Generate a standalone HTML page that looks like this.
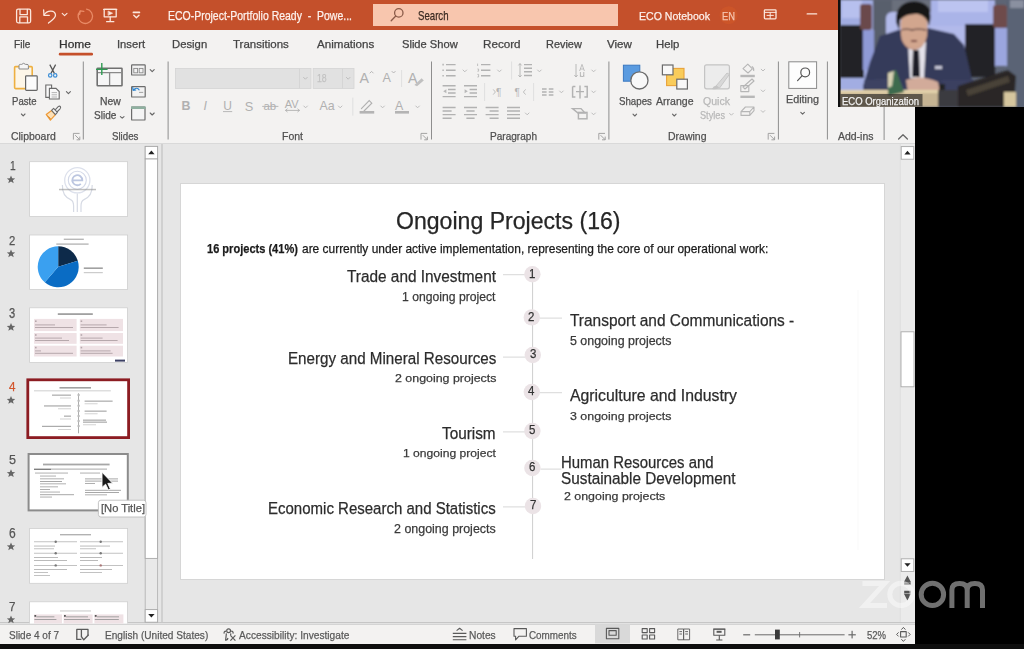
<!DOCTYPE html>
<html><head><meta charset="utf-8">
<style>
html,body{margin:0;padding:0;}
body{width:1024px;height:649px;overflow:hidden;background:#000;position:relative;font-family:"Liberation Sans",sans-serif;}
.a{position:absolute;}
.t{position:absolute;white-space:nowrap;line-height:1;transform-origin:0 0;-webkit-text-stroke:0.25px currentColor;}
svg{position:absolute;overflow:visible;}
</style></head><body>
<!-- title bar -->
<div class="a" style="left:0;top:0;width:838px;height:30px;background:#c4502b;"></div>
<div class="a" style="left:373px;top:4px;width:245px;height:22px;background:#f8c6ae;"></div>
<!-- tabs + ribbon -->
<div class="a" style="left:0;top:30px;width:915px;height:113px;background:#f3f2f1;"></div>
<div class="a" style="left:0;top:142.5px;width:915px;height:1.5px;background:#d9d9d9;"></div>
<!-- main area -->
<div class="a" style="left:0;top:144px;width:915px;height:479.5px;background:#e6e6e6;"></div>
<div class="a" style="left:161px;top:144px;width:1.5px;height:479.5px;background:#d0d0d0;"></div>
<!-- slide -->
<div class="a" style="left:180.5px;top:183.5px;width:703px;height:395px;background:#fff;box-shadow:0 0 0 1px #d6d6d6;"></div>
<!-- status bar -->
<div class="a" style="left:0;top:622px;width:915px;height:22px;background:#f3f2f1;"></div>
<div class="a" style="left:0;top:622px;width:915px;height:1px;background:#c6c6c6;"></div>
<div class="a" style="left:0;top:623px;width:915px;height:1px;background:#e2e2e2;"></div>
<div class="a" style="left:0;top:624px;width:915px;height:1.4px;background:#d4d4d4;"></div>
<!-- black right + bottom -->
<div class="a" style="left:915px;top:107px;width:109px;height:542px;background:#000;"></div>
<div class="a" style="left:0;top:643.8px;width:1024px;height:6px;background:#0e0e0e;"></div>
<!-- video -->
<svg style="left:0;top:0" width="1024" height="649" viewBox="0 0 1024 649">
<g fill="none" stroke="#fbe6dc" stroke-width="1.3" stroke-linejoin="round" stroke-linecap="round">
 <!-- save -->
 <rect x="16.6" y="9.2" width="14" height="13.6" rx="1.5"/>
 <path d="M20 9.4 V14.6 H27.3 V9.4"/>
 <path d="M19.8 22.6 V16.8 H27.5 V22.6"/>
 <!-- undo -->
 <path d="M44 15 C47 10 55 9.5 55.5 15 C55.8 18 51 21 48.5 23"/>
 <path d="M43.6 9.8 L44 15.3 L49.3 15.3"/>
 <path d="M62.2 13.4 L64.6 15.6 L67 13.4" stroke-width="1.1"/>
 <!-- redo faint -->
 <path d="M80.2 11.2 A7.2 7.2 0 1 0 86.6 9.2" stroke="#e98a66"/>
 <path d="M79.6 14.4 L80.2 10.8 L83.8 11.4" stroke="#e98a66"/>
 <!-- present -->
 <rect x="104.2" y="9.4" width="12" height="7.4"/>
 <path d="M103.6 9.3 H116.8"/>
 <path d="M110.2 16.8 V21.6 M106.6 21.7 H113.8"/>
 <path d="M108.4 11.2 L112.6 13.2 L108.4 15.2 Z" fill="#fbe6dc" stroke-width="0.6"/>
 <!-- customize -->
 <path d="M133.4 12.4 H139.4" stroke-width="1.7"/>
 <path d="M133.8 15.2 L136.4 17.8 L139 15.2" stroke-width="1.4"/>
 <!-- ribbon display -->
 <rect x="764.4" y="9.8" width="11.6" height="9" rx="0.8"/>
 <path d="M764.4 12.4 H776 M770.2 12.6 V18.6 M767 15.4 H773.4" stroke-width="1"/>
 <!-- minimize -->
 <path d="M807.2 13.9 H816.6" stroke-width="1.4"/>
</g>
<circle cx="728.6" cy="15.2" r="9" fill="#d45a28" opacity="0.55"/>
<!-- search icon -->
<g fill="none" stroke="#8a5a48" stroke-width="1.3" stroke-linecap="round">
 <circle cx="398.8" cy="12.9" r="4.2"/>
 <path d="M395.8 16 L391.2 20.8"/>
</g>
<!-- home underline -->
<rect x="58.8" y="52.8" width="34.2" height="2.6" rx="1.2" fill="#c5502b"/>
</svg>

<svg style="left:0;top:0" width="1024" height="649" viewBox="0 0 1024 649">
<!-- font boxes -->
<rect x="175.4" y="68.4" width="135.6" height="20" fill="#e1e1e1" stroke="#d4d4d4" stroke-width="0.8"/>
<rect x="299" y="68.8" width="0.8" height="19.4" fill="#d2d2d2"/>
<rect x="313.2" y="68.4" width="40.8" height="20" fill="#e1e1e1" stroke="#d4d4d4" stroke-width="0.8"/>
<rect x="342.2" y="68.8" width="0.8" height="19.4" fill="#d2d2d2"/>
<!-- separators -->
<g fill="#8e8e8e">
 <rect x="82.8" y="61.5" width="1" height="78"/>
 <rect x="167.6" y="61.5" width="1" height="78"/>
 <rect x="431" y="61.5" width="1" height="78"/>
 <rect x="608.4" y="61.5" width="1" height="78"/>
 <rect x="777.9" y="61.5" width="1" height="78"/>
 <rect x="826.9" y="61.5" width="1" height="78"/>
 <rect x="883.6" y="107" width="1" height="33"/>
</g>
<g fill="#dcdcdc">
 <rect x="401.2" y="70" width="0.9" height="17"/>
 <rect x="352.4" y="97.6" width="0.9" height="18"/>
 <rect x="511.2" y="61.5" width="0.9" height="18"/>
 <rect x="484.2" y="83" width="0.9" height="18"/>
 <rect x="533.2" y="83" width="0.9" height="18"/>
</g>
<!-- chevrons (dark) -->
<g fill="none" stroke="#666" stroke-width="1.1" stroke-linecap="round" stroke-linejoin="round">
 <path d="M21.4 114 L23.2 115.8 L25 114"/>
 <path d="M66.4 91.6 L68.4 93.6 L70.4 91.6"/>
 <path d="M120.4 116.6 L122.2 118.2 L124 116.6"/>
 <path d="M150.2 69.6 L152.2 71.6 L154.2 69.6"/>
 <path d="M150.2 113 L152.2 115 L154.2 113"/>
 <path d="M633 114.2 L634.8 116 L636.6 114.2"/>
 <path d="M672.5 114.2 L674.3 116 L676.1 114.2"/>
 <path d="M800.8 112.4 L802.6 114.2 L804.4 112.4"/>
 <path d="M898.6 139 L903 134.8 L907.4 139" stroke-width="1.3"/>
</g>
<!-- light chevrons -->
<g fill="none" stroke="#bdbdbd" stroke-width="1" stroke-linecap="round" stroke-linejoin="round">
 <path d="M303.6 77.4 L305.4 79.2 L307.2 77.4"/>
 <path d="M346.4 77.4 L348.2 79.2 L350 77.4"/>
 <path d="M303.8 106 L305.6 107.8 L307.4 106"/>
 <path d="M338.4 106 L340.2 107.8 L342 106"/>
 <path d="M380.8 106 L382.6 107.8 L384.4 106"/>
 <path d="M415.8 106 L417.6 107.8 L419.4 106"/>
 <path d="M463 70 L464.8 71.8 L466.6 70"/>
 <path d="M497.6 70 L499.4 71.8 L501.2 70"/>
 <path d="M537.6 70 L539.4 71.8 L541.2 70"/>
 <path d="M591.8 70 L593.6 71.8 L595.4 70"/>
 <path d="M559.6 91 L561.4 92.8 L563.2 91"/>
 <path d="M591.8 91 L593.6 92.8 L595.4 91"/>
 <path d="M525.4 113 L527.2 114.8 L529 113"/>
 <path d="M591.8 113 L593.6 114.8 L595.4 113"/>
 <path d="M729.6 113.4 L731.4 115.2 L733.2 113.4"/>
 <path d="M761.2 69.2 L763 71 L764.8 69.2"/>
 <path d="M761.2 90 L763 91.8 L764.8 90"/>
 <path d="M761.2 110.6 L763 112.4 L764.8 110.6"/>
</g>
<!-- dialog launchers -->
<g fill="none" stroke="#9a9a9a" stroke-width="0.9">
 <path d="M73.4 139.6 V133.4 H79.6 M75.2 135.2 L79.6 139.6 M79.8 136.6 V139.8 H76.6"/>
 <path d="M421 139.6 V133.4 H427.2 M422.8 135.2 L427.2 139.6 M427.4 136.6 V139.8 H424.2"/>
 <path d="M598.8 139.6 V133.4 H605 M600.6 135.2 L605 139.6 M605.2 136.6 V139.8 H602"/>
 <path d="M768.2 139.6 V133.4 H774.4 M770 135.2 L774.4 139.6 M774.6 136.6 V139.8 H771.4"/>
</g>
<!-- Paste -->
<rect x="14.6" y="66.6" width="17.6" height="22" rx="1" fill="#fdf6e8" stroke="#eeb040" stroke-width="1.6"/>
<path d="M19 69 V65.6 Q19 64.4 20.4 64.4 H21.6 Q23.6 62.2 25.6 64.4 H27 Q28.4 64.4 28.4 65.6 V69 Z" fill="#f6f6f6" stroke="#8a8a8a" stroke-width="1"/>
<rect x="25.6" y="75.8" width="11.6" height="14.6" rx="0.8" fill="#fbfbfb" stroke="#666" stroke-width="1.2"/>
<!-- scissors -->
<g fill="none" stroke-width="1.2">
 <path d="M49.8 64.6 L54.4 73.4 M55.6 64.6 L51 73.4" stroke="#555"/>
 <circle cx="50.2" cy="75.4" r="1.7" stroke="#3b8ed6"/>
 <circle cx="55.2" cy="75.4" r="1.7" stroke="#3b8ed6"/>
</g>
<!-- copy -->
<g fill="#f8f8f8" stroke="#6a6a6a" stroke-width="1.1">
 <path d="M45.8 85 H51.6 V97.4 H45.8 Z"/>
 <path d="M49.4 88.4 H56 L59.2 91.6 V99 H49.4 Z"/>
 <path d="M51.6 92.6 H57 M51.6 94.8 H57 M51.6 97 H57" stroke-width="0.7" stroke="#999"/>
</g>
<!-- format painter -->
<path d="M46.2 114.4 L51.6 110.4 L55.4 114.6 L50.4 120.2 Z" fill="#fbe0b8" stroke="#ef9a36" stroke-width="1.2" stroke-linejoin="round"/>
<path d="M47.4 116.2 L50.6 119 L49.4 117.6 Z" stroke="#ef9a36" stroke-width="1"/>
<path d="M51.6 110.4 L53.6 108.4 L57.4 112.4 L55.4 114.6 Z M55.2 109.8 L58.2 106.6 Q59.6 105.6 60.4 106.6 Q61 107.6 60 108.8 L57 112" fill="#f6f6f6" stroke="#6a6a6a" stroke-width="1.1" stroke-linejoin="round"/>
<!-- New slide -->
<rect x="97.2" y="68.2" width="24.8" height="17.6" rx="0.6" fill="#f6f6f6" stroke="#707070" stroke-width="1.6"/>
<path d="M98 72.6 H121.4 M109.6 73 V85" stroke="#8a8a8a" stroke-width="1.3" fill="none"/>
<path d="M101.8 63 V75 M96 69.4 H107.6" stroke="#2e9b52" stroke-width="1.4" fill="none"/>
<!-- layout -->
<rect x="131.6" y="64.8" width="13.6" height="10.2" rx="0.6" fill="#f2f2f2" stroke="#6c6c6c" stroke-width="1.2"/>
<rect x="133.8" y="68.4" width="3.8" height="4.4" fill="none" stroke="#8a8a8a" stroke-width="0.9"/><rect x="139.2" y="68.4" width="3.8" height="4.4" fill="none" stroke="#8a8a8a" stroke-width="0.9"/>
<!-- reset -->
<rect x="131.6" y="86.6" width="13.6" height="10.4" rx="0.6" fill="#f2f2f2" stroke="#6c6c6c" stroke-width="1.2"/>
<path d="M133.2 90 Q137 86.4 139.4 90.2 M132.6 87.2 L133.2 90.4 L136.2 90" stroke="#2f86d0" stroke-width="1.2" fill="none"/>
<path d="M139 92.4 H143.2" stroke="#999" stroke-width="0.9"/>
<!-- section -->
<rect x="131.6" y="107" width="13.4" height="13" rx="0.6" fill="#f4f4f4" stroke="#6c6c6c" stroke-width="1.2"/>
<rect x="131" y="106.4" width="14.6" height="2.6" fill="#8fb0a0"/>
<!-- disabled glyph icons -->
<g fill="#b0b0b0" font-family="Liberation Sans" >
 <text x="359.4" y="82.6" font-size="15" transform="translate(359.4 82.6) scale(0.95 1) translate(-359.4 -82.6)">A</text>
 <text x="382.6" y="82.4" font-size="12.6">A</text>
 <text x="408" y="82.6" font-size="14">A</text>
 <text x="181.6" y="110.4" font-size="12.4" font-weight="bold">B</text>
 <text x="203.6" y="110.4" font-size="12.4" font-style="italic">I</text>
 <text x="223.2" y="110" font-size="12">U</text>
 <text x="244.8" y="110.6" font-size="12.8">S</text>
 <text x="263.4" y="110" font-size="11.4">ab</text>
 <text x="284.8" y="107.6" font-size="11">AV</text>
 <text x="319.6" y="110.2" font-size="12.4">Aa</text>
 <text x="395" y="110" font-size="12.4">A</text>
</g>
<g fill="none" stroke="#b0b0b0" stroke-width="0.9" stroke-linecap="round">
 <path d="M370 73 L371.6 71.4 L373.2 73"/>
 <path d="M392 71.4 L393.6 73 L395.2 71.4"/>
 <path d="M223.4 111.6 H231.8"/>
 <path d="M262.6 106.4 H278"/>
 <path d="M285.6 110.4 H299.4 M287.2 109 L285.6 110.4 L287.2 111.8 M297.8 109 L299.4 110.4 L297.8 111.8"/>
 <path d="M414.4 85 L421.6 78.2 L423.8 80.4 L417 86.2 Z" fill="#c0c0c0" stroke="none"/>
 <path d="M361.4 108.6 L369.2 100.6 L371.8 103.2 L364 111" stroke-width="1.1"/>
</g>
<rect x="359.6" y="111" width="14.6" height="2.6" fill="#b4b4b4"/>
<rect x="395" y="111" width="14" height="2.6" fill="#b4b4b4"/>
<!-- paragraph icons -->
<g fill="none" stroke="#b2b2b2" stroke-width="1.45">
 <path d="M446 64.6 H455.6 M446 70.2 H455.6 M446 75.8 H455.6"/>
 <path d="M442.4 64.6 H443.8 M442.4 70.2 H443.8 M442.4 75.8 H443.8" stroke-width="1.6"/>
 <path d="M481 64.6 H490.4 M481 70.2 H490.4 M481 75.8 H490.4"/>
 <path d="M477.6 63.6 V66 M477.4 69 H478.6 V71.2 H477.4 M477.4 74.4 H478.6 V77 H477.4" stroke-width="0.8"/>
 <path d="M524 64.6 H532 M524 68.2 H532 M524 71.8 H532 M524 75.4 H532"/>
 <path d="M520 63.6 V77 M518.4 65.4 L520 63.6 L521.6 65.4 M518.4 75.2 L520 77 L521.6 75.2" stroke-width="0.9"/>
 <path d="M576 64 V77 M574.4 75 L576 77 L577.6 75 M580.4 77 V72 M583.8 77 V72 M580.4 75.2 L582.1 77 L583.8 75.2" stroke-width="0.9"/>
 <path d="M579.6 71 L582 64.4 L584.4 71 M580.4 69 H583.6" stroke-width="0.8"/>
 <path d="M442.6 85.8 H455.6 M448 89.4 H455.6 M448 93 H455.6 M442.6 96.6 H455.6"/>
 <path d="M443.2 91.2 L446.4 89.2 V93.2 Z" fill="#b8b8b8" stroke="none"/>
 <path d="M464 85.8 H477 M469.6 89.4 H477 M469.6 93 H477 M464 96.6 H477"/>
 <path d="M467.8 91.2 L464.6 89.2 V93.2 Z" fill="#b8b8b8" stroke="none"/>
 <path d="M542 89 H546.6 M542 92 H546.6 M542 95 H546.6 M548.8 89 H553.4 M548.8 92 H553.4 M548.8 95 H553.4"/>
 <path d="M572.6 86.4 H575.4 M572.6 86.4 V97 H575.4 M584.4 86.4 H587.2 V97 H584.4 M580 85.4 V98.4 M576 91.6 H584"/>
 <path d="M442.6 107.4 H455.6 M442.6 111 H451.6 M442.6 114.6 H455.6 M442.6 118.2 H451.6"/>
 <path d="M464 107.4 H477 M466.4 111 H474.6 M464 114.6 H477 M466.4 118.2 H474.6"/>
 <path d="M485.6 107.4 H498.6 M489.6 111 H498.6 M485.6 114.6 H498.6 M489.6 118.2 H498.6"/>
 <path d="M507 107.4 H520 M507 111 H520 M507 114.6 H520 M507 118.2 H520"/>
 <path d="M572.6 108.6 H581 L585 113 H578 Z"/>
 <rect x="578.4" y="112.4" width="8.6" height="6.4"/>
</g>
<g fill="#b4b4b4" font-family="Liberation Sans" font-size="10">
 <text x="496" y="96">¶</text>
 <text x="514.6" y="96">¶</text>
</g>
<g fill="none" stroke="#b8b8b8" stroke-width="0.9">
 <path d="M493.2 89.4 L495.4 92 L493.2 94.6"/>
 <path d="M525.6 89.4 L523.4 92 L525.6 94.6"/>
</g>
<!-- Shapes -->
<rect x="623.4" y="65.2" width="16.4" height="16" fill="#5a9be0" stroke="#3a78c0" stroke-width="1"/>
<circle cx="639.4" cy="80.4" r="8.6" fill="#f8f8f8" stroke="#6a6a6a" stroke-width="1.3"/>
<!-- Arrange -->
<rect x="666.6" y="68.4" width="17.4" height="17.2" fill="#f9cc5a" stroke="#e9a23a" stroke-width="1.1"/>
<rect x="662.4" y="65" width="10.6" height="9.8" fill="#f8f8f8" stroke="#6a6a6a" stroke-width="1.2"/>
<rect x="676.8" y="79.2" width="10.6" height="9.8" fill="#f8f8f8" stroke="#6a6a6a" stroke-width="1.2"/>
<!-- Quick styles -->
<rect x="704.6" y="64.8" width="24.8" height="24" rx="2" fill="#ececec" stroke="#c4c4c4" stroke-width="1.2"/>
<path d="M716 86 L727 73 L729.4 74.4 L719.6 88 Z" fill="#d8d8d8" stroke="#c0c0c0" stroke-width="0.8"/>
<path d="M712 89 Q714 85 717 86 L719 88 Q716 90 712 89 Z" fill="#c4c4c4"/>
<!-- shape fill/outline/effects -->
<g fill="none" stroke="#b6b6b6" stroke-width="1.1" stroke-linejoin="round">
 <path d="M743 68.6 L747.8 64.2 L752.4 68.8 L748 73 Z"/>
 <path d="M751.8 66.4 Q754.4 68.2 753.6 71"/>
 <path d="M743 87 L752 79 L754 81 L745 89 Z"/>
 <rect x="740.8" y="85.6" width="8" height="6"/>
 <path d="M741 111.6 L745.4 107 H754 L749.8 111.6 Z M741 111.6 V115.4 H749.8 L754 110.6 V107 M749.8 111.6 V115.4"/>
</g>
<rect x="740.4" y="74.8" width="14.4" height="2.4" fill="#b8b8b8"/>
<rect x="740.4" y="95.6" width="14.4" height="2.4" fill="#b8b8b8"/>
<!-- Editing -->
<rect x="788.8" y="61.8" width="27.8" height="26.6" fill="#fdfdfd" stroke="#8a8a8a" stroke-width="1"/>
<g fill="none" stroke="#555" stroke-width="1.2" stroke-linecap="round">
 <circle cx="805.2" cy="72.4" r="4.4"/>
 <path d="M802 75.8 L797.6 80.6"/>
</g>
</svg>

<svg style="left:0;top:0" width="1024" height="649" viewBox="0 0 1024 649">
<defs>
 <filter id="tb" x="-10%" y="-10%" width="120%" height="120%"><feGaussianBlur stdDeviation="0.35"/></filter>
 <clipPath id="pclip"><rect x="0" y="144" width="161" height="479.4"/></clipPath>
</defs>
<g clip-path="url(#pclip)">
<!-- stars -->
<g fill="#666">
 <path id="star" d="M11 175.4 L12.2 178.2 L15.2 178.4 L12.9 180.3 L13.7 183.2 L11 181.6 L8.3 183.2 L9.1 180.3 L6.8 178.4 L9.8 178.2 Z"/>
 <use href="#star" y="74"/>
 <use href="#star" y="147.6"/>
 <use href="#star" y="220.6"/>
 <use href="#star" y="293.8"/>
 <use href="#star" y="367"/>
 <use href="#star" y="440"/>
</g>
<!-- thumb 1 -->
<rect x="29.6" y="161.7" width="98" height="54.8" fill="#fff" stroke="#cfcfcf" stroke-width="0.8"/>
<g fill="none" filter="url(#tb)">
 <circle cx="77.3" cy="180.3" r="12.6" stroke="#dde1ec" stroke-width="1.3"/>
 <circle cx="77.3" cy="180.3" r="9" stroke="#d4d9e8" stroke-width="1.1"/>
 <path d="M72.3 180.3 H82.3 A5 5 0 1 0 80.8 183.8" stroke="#bcc6e0" stroke-width="1.8"/>
 <path d="M62.4 185 Q62 196 70.6 199.6 Q73.6 201 73.6 206 V212 M92.2 185 Q92.6 196 84 199.6 Q81 201 81 206 V212 M77.3 193.4 V212" stroke="#d6dae4" stroke-width="1.2"/>
</g>
<rect x="59" y="188.8" width="37" height="1.5" fill="#8a8a8a" opacity="0.55"/>
<!-- thumb 2 -->
<rect x="29.6" y="235" width="98" height="54.5" fill="#fff" stroke="#cfcfcf" stroke-width="0.8"/>
<rect x="63.8" y="238.6" width="20" height="1.4" fill="#9a9a9a" opacity="0.7"/>
<rect x="56.3" y="243.4" width="32.3" height="1.4" fill="#9a9a9a" opacity="0.7"/>
<g transform="translate(58.2 266.8)">
 <path d="M0 0 L0 -20.5 A20.5 20.5 0 0 1 19.6 -6 Z" fill="#0d2a4a"/>
 <path d="M0 0 L19.6 -6 A20.5 20.5 0 0 1 -13.4 15.5 Z" fill="#0a6cc4"/>
 <path d="M0 0 L-13.4 15.5 A20.5 20.5 0 0 1 0 -20.5 Z" fill="#3aa0f0"/>
</g>
<rect x="83.8" y="267.4" width="19" height="1.6" fill="#8a8a8a" opacity="0.8"/>
<rect x="83.8" y="272" width="19" height="1.2" fill="#aaa" opacity="0.6"/>
<!-- thumb 3 -->
<rect x="29.6" y="307.8" width="97.8" height="54.8" fill="#fff" stroke="#cfcfcf" stroke-width="0.8"/>
<rect x="57.8" y="313.2" width="35" height="1.8" fill="#8a8a8a" opacity="0.8"/>
<g fill="#efe2e5">
 <rect x="34.1" y="318.9" width="42.5" height="12.2"/>
 <rect x="79.8" y="318.9" width="43.2" height="12.2"/>
 <rect x="34.1" y="333" width="42.5" height="10.8"/>
 <rect x="79.8" y="333" width="43.2" height="10.8"/>
 <rect x="34.1" y="345.7" width="42.5" height="10.8"/>
 <rect x="79.8" y="345.7" width="43.2" height="10.8"/>
</g>
<g fill="#a89a9e" opacity="0.8">
 <rect x="35" y="324.4" width="20" height="1"/><rect x="35" y="327" width="38" height="1"/>
 <rect x="80.6" y="324.4" width="26" height="1"/><rect x="80.6" y="327" width="38" height="1"/>
 <rect x="35" y="337.6" width="27" height="1"/><rect x="35" y="340" width="34" height="1"/>
 <rect x="80.6" y="337.6" width="22" height="1"/><rect x="80.6" y="340" width="37" height="1"/>
 <rect x="35" y="350.4" width="6" height="1"/><rect x="35" y="352.8" width="38" height="1"/>
 <rect x="80.6" y="350.4" width="30" height="1"/><rect x="80.6" y="352.8" width="32" height="1"/>
 <rect x="35" y="320.4" width="1.6" height="1.6"/><rect x="80.6" y="320.4" width="1.6" height="1.6"/>
 <rect x="35" y="334.2" width="1.6" height="1.6"/><rect x="80.6" y="334.2" width="1.6" height="1.6"/>
 <rect x="35" y="346.8" width="1.6" height="1.6"/><rect x="80.6" y="346.8" width="1.6" height="1.6"/>
</g>
<rect x="115" y="359.6" width="10" height="2" fill="#3c4064"/>
<!-- thumb 4 selected -->
<rect x="27.8" y="379.8" width="100.8" height="57.8" fill="#fff" stroke="#8c1c22" stroke-width="2.8"/>
<g fill="#8a8a8a" opacity="0.8">
 <rect x="59.5" y="387" width="31.5" height="1.6"/>
 <rect x="34" y="390.4" width="76.8" height="0.9" opacity="0.6"/>
 <rect x="52" y="394.6" width="19" height="1.1"/><rect x="60" y="397.6" width="11" height="0.8" opacity="0.6"/>
 <rect x="84.6" y="400.6" width="28" height="1.1"/><rect x="84.6" y="403.4" width="13" height="0.8" opacity="0.6"/>
 <rect x="44" y="405.4" width="27" height="1.1"/><rect x="58" y="408.4" width="13" height="0.8" opacity="0.6"/>
 <rect x="84.6" y="410.6" width="22" height="1.1"/><rect x="84.6" y="413.4" width="13" height="0.8" opacity="0.6"/>
 <rect x="64" y="415.6" width="7" height="1.1"/><rect x="60" y="418.6" width="11" height="0.8" opacity="0.6"/>
 <rect x="83" y="419.6" width="23" height="1.1"/><rect x="83" y="421.6" width="24" height="1.1"/><rect x="83" y="424.4" width="13" height="0.8" opacity="0.6"/>
 <rect x="42" y="425.8" width="29" height="1.1"/><rect x="58" y="429" width="13" height="0.8" opacity="0.6"/>
</g>
<rect x="78.2" y="393.3" width="0.8" height="40" fill="#999"/>
<g fill="#bbb"><circle cx="78.6" cy="395" r="1.2"/><circle cx="78.6" cy="400.8" r="1.2"/><circle cx="78.6" cy="405.8" r="1.2"/><circle cx="78.6" cy="411" r="1.2"/><circle cx="78.6" cy="416" r="1.2"/><circle cx="78.6" cy="421" r="1.2"/><circle cx="78.6" cy="426" r="1.2"/></g>
<!-- thumb 5 hover -->
<rect x="28.6" y="454" width="99.2" height="56.4" fill="#fff" stroke="#8c8c8c" stroke-width="2"/>
<g fill="#8a8a8a" opacity="0.75">
 <rect x="43" y="463.6" width="66.6" height="1.8"/>
 <rect x="34" y="468.6" width="17" height="1.4" fill="#555"/><rect x="51" y="468.6" width="56" height="1"/>
 <rect x="35" y="472.6" width="33" height="0.9"/><rect x="80" y="472.6" width="20" height="0.9"/>
 <rect x="40" y="475.6" width="16" height="0.9"/><rect x="40" y="478.4" width="24" height="0.9"/>
 <rect x="40" y="481" width="22" height="1"/><rect x="40" y="483.4" width="26" height="0.9"/>
 <rect x="40" y="486.4" width="18" height="0.9"/><rect x="40" y="489" width="10" height="0.9"/>
 <rect x="40" y="491.6" width="20" height="0.9"/><rect x="40" y="494.2" width="34" height="1"/>
 <rect x="40" y="496.6" width="12" height="0.9"/>
 <rect x="85" y="478.4" width="33" height="1"/><rect x="85" y="480.6" width="33" height="1"/><rect x="85" y="483" width="10" height="0.9"/>
 <rect x="85" y="489.8" width="36" height="1"/><rect x="85" y="492" width="34" height="1"/><rect x="85" y="494.4" width="22" height="0.9"/>
</g>
<!-- cursor -->
<path d="M102 472.2 L102 487.4 L105.6 484.2 L108.4 490 L110.4 489 L107.8 483.4 L112.6 483.2 Z" fill="#1a1a1a" stroke="#fff" stroke-width="0.9"/>
<!-- tooltip -->

<!-- thumb 6 -->
<rect x="29.6" y="528.5" width="98" height="54.8" fill="#fff" stroke="#cfcfcf" stroke-width="0.8"/>
<g fill="#999" opacity="0.75">
 <rect x="60" y="534" width="31" height="1.4"/>
 <rect x="34" y="541.4" width="43" height="0.8"/><rect x="80" y="541.4" width="43" height="0.8"/>
 <rect x="34" y="552.8" width="43" height="0.8"/><rect x="80" y="552.8" width="43" height="0.8"/>
 <rect x="34" y="565" width="43" height="0.8"/><rect x="80" y="565" width="43" height="0.8"/>
 <rect x="34" y="545.6" width="21" height="0.9"/><rect x="34" y="548.4" width="20" height="0.8"/>
 <rect x="80" y="545.6" width="30" height="0.9"/><rect x="80" y="548.4" width="16" height="0.8"/>
 <rect x="34" y="557" width="24" height="0.9"/><rect x="34" y="560" width="33" height="0.9"/>
 <rect x="80" y="557" width="22" height="0.9"/><rect x="80" y="560" width="18" height="0.9"/>
 <rect x="34" y="569" width="33" height="0.9"/><rect x="34" y="572" width="14" height="0.8"/><rect x="34" y="575" width="16" height="0.8"/>
 <rect x="80" y="569" width="32" height="0.9"/><rect x="80" y="572" width="22" height="0.8"/>
</g>
<g fill="#777"><circle cx="55.7" cy="541.8" r="1.2"/><circle cx="100.7" cy="541.8" r="1.2"/><circle cx="55.7" cy="553.2" r="1.2"/><circle cx="100.7" cy="553.2" r="1.2"/><circle cx="55.7" cy="565.4" r="1.2"/><circle cx="100.7" cy="565.4" r="1.2" fill="#a77"/></g>
<!-- thumb 7 -->
<rect x="29.6" y="601.8" width="98" height="40" fill="#fff" stroke="#cfcfcf" stroke-width="0.8"/>
<rect x="60" y="610.4" width="31" height="1.1" fill="#aaa" opacity="0.6"/>
<g fill="#efe2e5"><rect x="34" y="614.4" width="28" height="12"/><rect x="63.6" y="614.4" width="29" height="12"/><rect x="94.4" y="614.4" width="29" height="12"/></g>
<g fill="#555"><rect x="34.4" y="615" width="1.8" height="1.8"/><rect x="64" y="615" width="1.8" height="1.8"/><rect x="94.8" y="615" width="1.8" height="1.8"/></g>
<g fill="#999"><rect x="36.4" y="616.4" width="18" height="0.9"/><rect x="66" y="616.4" width="22" height="0.9"/><rect x="97" y="616.4" width="22" height="0.9"/>
<rect x="34.4" y="619" width="22" height="0.9"/><rect x="64" y="619" width="26" height="0.9"/><rect x="94.8" y="619" width="24" height="0.9"/></g>
</g>
<!-- left scrollbar -->
<rect x="145.2" y="146.4" width="12.4" height="475.4" fill="#e9e9e9" stroke="#b4b4b4" stroke-width="0.9"/>
<rect x="145.2" y="146.4" width="12.4" height="12.6" fill="#fff" stroke="#a8a8a8" stroke-width="0.9"/>
<path d="M148.2 154.2 L151.4 150.6 L154.6 154.2 Z" fill="#222"/>
<rect x="145.2" y="159" width="12.4" height="399.4" fill="#fff" stroke="#a8a8a8" stroke-width="0.9"/>
<rect x="145.2" y="609.6" width="12.4" height="12.6" fill="#fff" stroke="#a8a8a8" stroke-width="0.9"/>
<path d="M148.2 614 L151.4 617.6 L154.6 614 Z" fill="#222"/>
<!-- right scrollbar -->
<rect x="900.4" y="144" width="14.6" height="478" fill="#ebebeb"/>
<rect x="899.8" y="144" width="0.8" height="478" fill="#dcdcdc"/>
<rect x="901.2" y="146.6" width="12.6" height="12.6" fill="#fff" stroke="#a8a8a8" stroke-width="0.9"/>
<path d="M904.4 154.4 L907.5 150.8 L910.6 154.4 Z" fill="#222"/>
<rect x="901" y="331.8" width="13" height="55" fill="#fff" stroke="#a8a8a8" stroke-width="0.9"/>
<rect x="901.2" y="558.8" width="12.6" height="12.6" fill="#fff" stroke="#a8a8a8" stroke-width="0.9"/>
<path d="M904.4 563.2 L907.5 566.8 L910.6 563.2 Z" fill="#222"/>
<g fill="#555">
 <path d="M903.8 582.2 L907.4 575.6 L911 582.2 Z M904.2 582.6 H910.6 V584.8 H904.2 Z"/>
 <path d="M904.2 590.8 H910.6 V593 H904.2 Z M903.8 593.4 H911 L907.4 600.4 Z"/>
</g>
<rect x="98.4" y="500.2" width="47.6" height="16.8" rx="2.5" fill="#fff" stroke="#bdbdbd" stroke-width="0.9"/>
</svg>

<svg style="left:0;top:0" width="1024" height="649" viewBox="0 0 1024 649">
<rect x="532" y="274" width="1.1" height="285" fill="#d2d2d2"/>
<g fill="#d8d8d8">
 <rect x="503" y="274.2" width="22" height="1"/>
 <rect x="539.6" y="317.6" width="22.4" height="1"/>
 <rect x="503" y="356.6" width="22" height="1"/>
 <rect x="539.6" y="392.2" width="22.4" height="1"/>
 <rect x="503" y="431.4" width="22" height="1"/>
 <rect x="540.4" y="468.6" width="21" height="1"/>
 <rect x="503" y="506.4" width="22" height="1"/>
</g>
<g fill="#ebe3e6">
 <circle cx="532.4" cy="274.2" r="8.2"/>
 <circle cx="531.8" cy="317.4" r="8.2"/>
 <circle cx="532.8" cy="355" r="8.2"/>
 <circle cx="531.8" cy="392" r="8.2"/>
 <circle cx="532.4" cy="431" r="8.2"/>
 <circle cx="532.4" cy="468" r="8.2"/>
 <circle cx="533" cy="506" r="8.2"/>
</g>
<rect x="857.6" y="290" width="0.8" height="260" fill="#f7f7f7"/>
</svg>

<svg style="left:0;top:0" width="1024" height="649" viewBox="0 0 1024 649">
<rect x="595" y="624.4" width="35" height="19" fill="#d9d9d9"/>
<g fill="none" stroke="#5a5a5a" stroke-width="1.1" stroke-linejoin="round">
 <!-- notes book -->
 <path d="M81.4 639.4 H76.8 V629.4 H81.4 V637.2 M81.4 629.4 H88 V635.2" stroke-width="1.3"/>
 <path d="M81.6 637 L83.8 639.8 L88.6 634.8" stroke-width="1.3"/>
 <!-- accessibility -->
 <circle cx="228.6" cy="630.8" r="1.9" stroke-width="1.2"/>
 <path d="M224.2 633.6 Q223.6 631.4 226 631.2 M233 633.6 Q233.6 631.4 231.2 631.2 M226.4 633.4 L225.6 640.2 Q227.4 640.6 228 638 M230.8 633.4 L230.6 635.2" stroke-width="1.2"/>
 <path d="M230.4 635.4 L235.4 640.6 M235.4 635.4 L230.4 640.6" stroke-width="1.2"/>
 <!-- notes -->
 <path d="M452.8 633.4 H466.4 M452.8 636.6 H466.4 M452.8 639.8 H466.4 M456.6 630.6 L459.6 628.2 L462.6 630.6"/>
 <!-- comments -->
 <path d="M514 628.6 H526.4 V636.2 H519 L515.6 639.8 V636.2 H514 Z"/>
 <!-- normal -->
 <rect x="606.4" y="628.4" width="12.4" height="10.4"/>
 <rect x="609" y="630.6" width="7.2" height="4.6"/>
 <!-- sorter -->
 <rect x="642.2" y="628.6" width="5" height="4"/><rect x="649.6" y="628.6" width="5" height="4"/>
 <rect x="642.2" y="635" width="5" height="4"/><rect x="649.6" y="635" width="5" height="4"/>
 <!-- reading -->
 <path d="M677.8 629 H683.6 V639.8 H677.8 Z M683.6 629 H689.6 V639.8 H683.6 Z M679.4 631.6 H682 M679.4 634 H682 M685.2 631.6 H688 M685.2 634 H688" stroke-width="0.9"/>
 <!-- presenter -->
 <rect x="713.8" y="629.2" width="11" height="6"/>
 <path d="M713.2 629 H725.4 M719.3 635.2 V639.6 M716.2 640 H722.4"/>
 <rect x="716.6" y="630.8" width="5" height="2" fill="#5a5a5a" stroke="none"/>
 <!-- fit -->
 <rect x="900.6" y="631.6" width="5.6" height="5.4"/>
 <path d="M901.4 629.6 L903.4 627.4 L905.4 629.6 M901.4 639.2 L903.4 641.4 L905.4 639.2 M898.6 632.4 L896.6 634.4 L898.6 636.4 M908.2 632.4 L910.2 634.4 L908.2 636.4" stroke-width="1"/>
</g>
<g fill="#6a6a6a">
 <rect x="743.2" y="634.2" width="7" height="1.2"/>
 <rect x="754.8" y="634.3" width="89.8" height="1"/>
 <rect x="799.2" y="632" width="0.9" height="5.4"/>
 <rect x="848.4" y="634.2" width="7.4" height="1.2"/><rect x="851.5" y="630.8" width="1.2" height="7.6"/>
</g>
<rect x="775" y="629.6" width="4.8" height="9.8" fill="#3a3a3a"/>
<!-- zoom watermark -->
<g fill="none" stroke="#fff" stroke-width="5" opacity="0.44" stroke-linecap="butt" stroke-linejoin="miter">
 <path d="M862.5 583.6 H884.5 L864.6 605.4 H887"/>
 <circle cx="901" cy="594.4" r="11.2"/>
 <circle cx="932.4" cy="594.4" r="11.2"/>
 <path d="M951.9 608 V590 Q951.9 583.4 959.5 583.4 Q967.2 583.4 967.2 590 V608 M967.2 590 Q967.2 583.4 974.9 583.4 Q982.5 583.4 982.5 590 V608"/>
</g>
</svg>

<svg style="left:838px;top:0" width="186" height="107" viewBox="0 0 186 107">
<defs><filter id="vb" x="-5%" y="-5%" width="110%" height="110%"><feGaussianBlur stdDeviation="0.9"/></filter>
<clipPath id="vc"><rect x="0" y="0" width="186" height="107"/></clipPath></defs>
<g clip-path="url(#vc)">
<rect x="0" y="0" width="186" height="107" fill="#5d6474"/>
<g filter="url(#vb)">
<rect x="34" y="0" width="20" height="95" fill="#585e6c"/>
<rect x="54" y="0" width="40" height="14" fill="#6a6f7c"/>
<rect x="168" y="0" width="18" height="107" fill="#5a6474"/>
<rect x="172" y="0" width="14" height="8" fill="#8a90a0"/>
<!-- left chair -->
<rect x="2" y="0" width="33" height="92" fill="#a2ade2"/>
<rect x="4" y="0" width="20" height="18" fill="#b7c0ee"/>
<rect x="2" y="25" width="24" height="53" fill="#242428"/>
<rect x="22" y="4" width="12" height="26" rx="3" fill="#6b4a4c"/>
<rect x="25" y="30" width="11" height="40" fill="#8f9ad6"/>
<!-- center chair -->
<rect x="48" y="12" width="80" height="70" rx="6" fill="#b2baea"/>
<!-- right chair -->
<rect x="93" y="0" width="64" height="26" fill="#aab4e8"/>
<rect x="100" y="0" width="50" height="12" fill="#bcc4f0"/>
<rect x="127" y="24" width="30" height="53" fill="#212126"/>
<rect x="155" y="5" width="14" height="23" rx="3" fill="#6e4b4c"/>
<rect x="157" y="28" width="12" height="38" fill="#9ba6de"/>
<!-- suit -->
<path d="M42 36 L60 30 L90 28 L116 34 L126 45 L133 75 L136 92 L120 96 L100 95 L60 95 L26 94 L25 86 L32 62 Z" fill="#363b5a"/>
<path d="M26 80 L60 78 L70 92 L28 94 Z" fill="#3c4262"/>
<path d="M104 80 L136 80 L137 92 L104 94 Z" fill="#3a4060"/>
<!-- shirt & tie -->
<path d="M70 44 L88 42 L86 78 L72 78 Z" fill="#e4e2ea"/>
<path d="M75 50 L81 50 L82 77 L74 77 Z" fill="#1b1b28"/>
<!-- pocket square -->
<rect x="97" y="66" width="7" height="3" fill="#c8c8d8"/>
<!-- face -->
<path d="M88 38 Q85 50 76 50 Q67 50 63 38 Z" fill="#b88c7c"/>
<path d="M62.5 24 Q63 12 76 12 Q89 12 89.5 24 L89 36 Q87 48 76 49 Q65 48 63 36 Z" fill="#d2a68e"/>
<path d="M58 22 Q57 6 70 2 Q84 -1 91 8 Q94 16 91 26 Q89 16 80 14 Q68 13 62 20 L61 30 Z" fill="#141414"/>
<path d="M63.5 30 Q68 28.4 74 30 Q80 28.4 88 30" fill="none" stroke="#5a4040" stroke-width="1.3"/>
<rect x="73" y="40" width="6" height="2" fill="#7a4a44"/>
<!-- hands -->
<path d="M68 80 Q82 74 100 82 L102 92 L70 93 Z" fill="#d2ab9a"/>
<rect x="101" y="84" width="6" height="8" fill="#222"/>
<!-- desk -->
<rect x="0" y="90" width="100" height="17" fill="#c6b493"/>
<rect x="0" y="90" width="100" height="3" fill="#e4d4ac"/>
<!-- flag -->
<path d="M50 73 L58 70 L66 92 L50 96 Z" fill="#3d6b4e"/>
<path d="M50 73 L56 71 L54 86 L50 88 Z" fill="#d8d2b4"/>
<!-- monitor -->
<path d="M120 86 L170 70 L178 76 L176 107 L118 107 Z" fill="#2a2725"/>
<path d="M128 90 L170 76 L172 82 L130 96 Z" fill="#4a4238"/>
<rect x="166" y="92" width="12" height="15" fill="#d6c69e"/>
<rect x="100" y="90" width="20" height="17" fill="#3a3a40"/>
</g>
<rect x="0" y="0" width="2.5" height="107" fill="#101010"/>
<rect x="2.5" y="94" width="82" height="12.5" fill="rgba(30,30,30,0.62)"/>
</g>
</svg>

<span class="t" id="t0" style="left:167.6px;top:10.0px;font-size:12.50px;color:#fdf1ec;font-weight:400;font-family:'Liberation Sans',sans-serif;transform:scaleX(0.8381);">ECO-Project-Portfolio Ready&nbsp; -&nbsp; Powe...</span>
<span class="t" id="t1" style="left:418.0px;top:10.0px;font-size:12.80px;color:#3a2a22;font-weight:400;font-family:'Liberation Sans',sans-serif;transform:scaleX(0.7522);">Search</span>
<span class="t" id="t2" style="left:639.0px;top:11.0px;font-size:11.80px;color:#fdf1ec;font-weight:400;font-family:'Liberation Sans',sans-serif;transform:scaleX(0.8948);">ECO Notebook</span>
<span class="t" id="t3" style="left:722.0px;top:11.0px;font-size:11.80px;color:#f6c6b0;font-weight:400;font-family:'Liberation Sans',sans-serif;transform:scaleX(0.7931);">EN</span>
<span class="t" id="t4" style="left:13.5px;top:39.0px;font-size:10.60px;color:#444;font-weight:400;font-family:'Liberation Sans',sans-serif;transform:scaleX(0.9544);">File</span>
<span class="t" id="t5" style="left:59.0px;top:39.0px;font-size:10.60px;color:#333;font-weight:400;font-family:'Liberation Sans',sans-serif;transform:scaleX(1.1321);">Home</span>
<span class="t" id="t6" style="left:117.2px;top:39.0px;font-size:10.60px;color:#444;font-weight:400;font-family:'Liberation Sans',sans-serif;transform:scaleX(1.0604);">Insert</span>
<span class="t" id="t7" style="left:171.7px;top:39.0px;font-size:10.60px;color:#444;font-weight:400;font-family:'Liberation Sans',sans-serif;transform:scaleX(1.0672);">Design</span>
<span class="t" id="t8" style="left:233.2px;top:39.0px;font-size:10.60px;color:#444;font-weight:400;font-family:'Liberation Sans',sans-serif;transform:scaleX(1.0851);">Transitions</span>
<span class="t" id="t9" style="left:316.7px;top:39.0px;font-size:10.60px;color:#444;font-weight:400;font-family:'Liberation Sans',sans-serif;transform:scaleX(1.0934);">Animations</span>
<span class="t" id="t10" style="left:401.7px;top:39.0px;font-size:10.60px;color:#444;font-weight:400;font-family:'Liberation Sans',sans-serif;transform:scaleX(1.0509);">Slide Show</span>
<span class="t" id="t11" style="left:483.4px;top:39.0px;font-size:10.60px;color:#444;font-weight:400;font-family:'Liberation Sans',sans-serif;transform:scaleX(1.1008);">Record</span>
<span class="t" id="t12" style="left:545.8px;top:39.0px;font-size:10.60px;color:#444;font-weight:400;font-family:'Liberation Sans',sans-serif;transform:scaleX(1.0302);">Review</span>
<span class="t" id="t13" style="left:606.5px;top:39.0px;font-size:10.60px;color:#444;font-weight:400;font-family:'Liberation Sans',sans-serif;transform:scaleX(1.0930);">View</span>
<span class="t" id="t14" style="left:656.3px;top:39.0px;font-size:10.60px;color:#444;font-weight:400;font-family:'Liberation Sans',sans-serif;transform:scaleX(1.0735);">Help</span>
<span class="t" id="t15" style="left:11.8px;top:96.0px;font-size:10.50px;color:#505050;font-weight:400;font-family:'Liberation Sans',sans-serif;transform:scaleX(0.9122);">Paste</span>
<span class="t" id="t16" style="left:10.8px;top:131.0px;font-size:10.80px;color:#505050;font-weight:400;font-family:'Liberation Sans',sans-serif;transform:scaleX(0.9671);">Clipboard</span>
<span class="t" id="t17" style="left:100.0px;top:96.0px;font-size:10.50px;color:#505050;font-weight:400;font-family:'Liberation Sans',sans-serif;transform:scaleX(0.9897);">New</span>
<span class="t" id="t18" style="left:93.7px;top:110.0px;font-size:10.80px;color:#505050;font-weight:400;font-family:'Liberation Sans',sans-serif;transform:scaleX(0.9286);">Slide</span>
<span class="t" id="t19" style="left:112.4px;top:131.0px;font-size:10.80px;color:#505050;font-weight:400;font-family:'Liberation Sans',sans-serif;transform:scaleX(0.8973);">Slides</span>
<span class="t" id="t20" style="left:282.0px;top:131.0px;font-size:10.80px;color:#505050;font-weight:400;font-family:'Liberation Sans',sans-serif;transform:scaleX(0.9718);">Font</span>
<span class="t" id="t21" style="left:316.6px;top:73.0px;font-size:11.80px;color:#c2c2c2;font-weight:400;font-family:'Liberation Sans',sans-serif;transform:scaleX(0.7390);">18</span>
<span class="t" id="t22" style="left:489.7px;top:131.0px;font-size:10.80px;color:#505050;font-weight:400;font-family:'Liberation Sans',sans-serif;transform:scaleX(0.9321);">Paragraph</span>
<span class="t" id="t23" style="left:618.6px;top:96.0px;font-size:10.50px;color:#505050;font-weight:400;font-family:'Liberation Sans',sans-serif;transform:scaleX(0.9235);">Shapes</span>
<span class="t" id="t24" style="left:656.3px;top:96.0px;font-size:10.50px;color:#505050;font-weight:400;font-family:'Liberation Sans',sans-serif;transform:scaleX(1.0038);">Arrange</span>
<span class="t" id="t25" style="left:702.8px;top:96.0px;font-size:10.50px;color:#b8b8b8;font-weight:400;font-family:'Liberation Sans',sans-serif;transform:scaleX(1.0058);">Quick</span>
<span class="t" id="t26" style="left:700.0px;top:110.0px;font-size:10.80px;color:#b8b8b8;font-weight:400;font-family:'Liberation Sans',sans-serif;transform:scaleX(0.8502);">Styles</span>
<span class="t" id="t27" style="left:667.5px;top:131.0px;font-size:10.80px;color:#505050;font-weight:400;font-family:'Liberation Sans',sans-serif;transform:scaleX(0.9720);">Drawing</span>
<span class="t" id="t28" style="left:786.0px;top:94.0px;font-size:10.80px;color:#505050;font-weight:400;font-family:'Liberation Sans',sans-serif;transform:scaleX(0.9995);">Editing</span>
<span class="t" id="t29" style="left:837.7px;top:131.0px;font-size:10.50px;color:#505050;font-weight:400;font-family:'Liberation Sans',sans-serif;transform:scaleX(0.9969);">Add-ins</span>
<span class="t" id="t30" style="left:8.9px;top:630.0px;font-size:11.30px;color:#5a5a5a;font-weight:400;font-family:'Liberation Sans',sans-serif;transform:scaleX(0.8845);">Slide 4 of 7</span>
<span class="t" id="t31" style="left:104.9px;top:630.0px;font-size:11.30px;color:#5a5a5a;font-weight:400;font-family:'Liberation Sans',sans-serif;transform:scaleX(0.8940);">English (United States)</span>
<span class="t" id="t32" style="left:239.4px;top:630.0px;font-size:11.30px;color:#5a5a5a;font-weight:400;font-family:'Liberation Sans',sans-serif;transform:scaleX(0.9017);">Accessibility: Investigate</span>
<span class="t" id="t33" style="left:468.7px;top:630.0px;font-size:11.30px;color:#5a5a5a;font-weight:400;font-family:'Liberation Sans',sans-serif;transform:scaleX(0.9046);">Notes</span>
<span class="t" id="t34" style="left:529.4px;top:630.0px;font-size:11.30px;color:#5a5a5a;font-weight:400;font-family:'Liberation Sans',sans-serif;transform:scaleX(0.8732);">Comments</span>
<span class="t" id="t35" style="left:867.4px;top:630.0px;font-size:11.30px;color:#5a5a5a;font-weight:400;font-family:'Liberation Sans',sans-serif;transform:scaleX(0.8442);">52%</span>
<span class="t" id="t36" style="left:100.5px;top:502.0px;font-size:11.60px;color:#555;font-weight:400;font-family:'Liberation Sans',sans-serif;transform:scaleX(0.9617);">[No Title]</span>
<span class="t" id="t37" style="left:9.5px;top:159.0px;font-size:13.10px;color:#555;font-weight:400;font-family:'Liberation Sans',sans-serif;transform:scaleX(0.7812);">1</span>
<span class="t" id="t38" style="left:9.2px;top:234.0px;font-size:13.70px;color:#555;font-weight:400;font-family:'Liberation Sans',sans-serif;transform:scaleX(0.8262);">2</span>
<span class="t" id="t39" style="left:9.0px;top:307.0px;font-size:13.80px;color:#555;font-weight:400;font-family:'Liberation Sans',sans-serif;transform:scaleX(0.8065);">3</span>
<span class="t" id="t40" style="left:9.0px;top:380.0px;font-size:13.10px;color:#d2542a;font-weight:400;font-family:'Liberation Sans',sans-serif;transform:scaleX(0.8908);">4</span>
<span class="t" id="t41" style="left:8.5px;top:453.0px;font-size:13.70px;color:#555;font-weight:400;font-family:'Liberation Sans',sans-serif;transform:scaleX(0.9180);">5</span>
<span class="t" id="t42" style="left:8.8px;top:527.0px;font-size:13.80px;color:#555;font-weight:400;font-family:'Liberation Sans',sans-serif;transform:scaleX(0.8715);">6</span>
<span class="t" id="t43" style="left:8.8px;top:600.0px;font-size:13.70px;color:#555;font-weight:400;font-family:'Liberation Sans',sans-serif;transform:scaleX(0.8393);">7</span>
<span class="t" id="t44" style="left:395.5px;top:210.0px;font-size:23.10px;color:#262626;font-weight:400;font-family:'Liberation Sans',sans-serif;transform:scaleX(0.9994);">Ongoing Projects (16)</span>
<span class="t" id="t45" style="left:206.6px;top:242.0px;font-size:13.10px;color:#1a1a1a;font-weight:700;font-family:'Liberation Sans',sans-serif;transform:scaleX(0.8439);">16 projects (41%)</span>
<span class="t" id="t46" style="left:302.2px;top:242.0px;font-size:13.10px;color:#1a1a1a;font-weight:400;font-family:'Liberation Sans',sans-serif;transform:scaleX(0.9114);">are currently under active implementation, representing the core of our operational work:</span>
<span class="t" id="t47" style="left:346.8px;top:268.0px;font-size:17.30px;color:#2c2c2c;font-weight:400;font-family:'Liberation Sans',sans-serif;transform:scaleX(0.8897);">Trade and Investment</span>
<span class="t" id="t48" style="left:402.3px;top:291.0px;font-size:12.90px;color:#3a3a3a;font-weight:400;font-family:'Liberation Sans',sans-serif;transform:scaleX(0.9453);">1 ongoing project</span>
<span class="t" id="t49" style="left:570.0px;top:312.0px;font-size:17.20px;color:#2c2c2c;font-weight:400;font-family:'Liberation Sans',sans-serif;transform:scaleX(0.8981);">Transport and Communications -</span>
<span class="t" id="t50" style="left:569.5px;top:336.0px;font-size:11.90px;color:#3a3a3a;font-weight:400;font-family:'Liberation Sans',sans-serif;transform:scaleX(1.0444);">5 ongoing projects</span>
<span class="t" id="t51" style="left:287.6px;top:350.0px;font-size:17.40px;color:#2c2c2c;font-weight:400;font-family:'Liberation Sans',sans-serif;transform:scaleX(0.8728);">Energy and Mineral Resources</span>
<span class="t" id="t52" style="left:394.6px;top:373.0px;font-size:11.80px;color:#3a3a3a;font-weight:400;font-family:'Liberation Sans',sans-serif;transform:scaleX(1.0516);">2 ongoing projects</span>
<span class="t" id="t53" style="left:569.5px;top:387.0px;font-size:17.00px;color:#2c2c2c;font-weight:400;font-family:'Liberation Sans',sans-serif;transform:scaleX(0.9301);">Agriculture and Industry</span>
<span class="t" id="t54" style="left:569.5px;top:411.0px;font-size:11.80px;color:#3a3a3a;font-weight:400;font-family:'Liberation Sans',sans-serif;transform:scaleX(1.0527);">3 ongoing projects</span>
<span class="t" id="t55" style="left:441.5px;top:426.0px;font-size:16.60px;color:#2c2c2c;font-weight:400;font-family:'Liberation Sans',sans-serif;transform:scaleX(0.9226);">Tourism</span>
<span class="t" id="t56" style="left:402.9px;top:448.0px;font-size:11.80px;color:#3a3a3a;font-weight:400;font-family:'Liberation Sans',sans-serif;transform:scaleX(1.0252);">1 ongoing project</span>
<span class="t" id="t57" style="left:561.3px;top:455.0px;font-size:16.00px;color:#2c2c2c;font-weight:400;font-family:'Liberation Sans',sans-serif;transform:scaleX(0.9325);">Human Resources and</span>
<span class="t" id="t58" style="left:561.3px;top:470.0px;font-size:17.40px;color:#2c2c2c;font-weight:400;font-family:'Liberation Sans',sans-serif;transform:scaleX(0.8805);">Sustainable Development</span>
<span class="t" id="t59" style="left:563.7px;top:491.0px;font-size:11.80px;color:#3a3a3a;font-weight:400;font-family:'Liberation Sans',sans-serif;transform:scaleX(1.0506);">2 ongoing projects</span>
<span class="t" id="t60" style="left:268.2px;top:500.0px;font-size:17.40px;color:#2c2c2c;font-weight:400;font-family:'Liberation Sans',sans-serif;transform:scaleX(0.8629);">Economic Research and Statistics</span>
<span class="t" id="t61" style="left:394.2px;top:522.0px;font-size:13.70px;color:#3a3a3a;font-weight:400;font-family:'Liberation Sans',sans-serif;transform:scaleX(0.9092);">2 ongoing projects</span>
<span class="t" id="t62" style="left:528.8px;top:267.0px;font-size:13.10px;color:#333;font-weight:400;font-family:'Liberation Sans',sans-serif;transform:scaleX(0.8771);">1</span>
<span class="t" id="t63" style="left:527.8px;top:310.0px;font-size:13.10px;color:#333;font-weight:400;font-family:'Liberation Sans',sans-serif;transform:scaleX(0.8771);">2</span>
<span class="t" id="t64" style="left:529.6px;top:347.0px;font-size:13.10px;color:#333;font-weight:400;font-family:'Liberation Sans',sans-serif;transform:scaleX(0.8771);">3</span>
<span class="t" id="t65" style="left:527.8px;top:384.0px;font-size:13.10px;color:#333;font-weight:400;font-family:'Liberation Sans',sans-serif;transform:scaleX(0.8771);">4</span>
<span class="t" id="t66" style="left:528.8px;top:423.0px;font-size:13.10px;color:#333;font-weight:400;font-family:'Liberation Sans',sans-serif;transform:scaleX(0.8771);">5</span>
<span class="t" id="t67" style="left:528.8px;top:460.0px;font-size:13.10px;color:#333;font-weight:400;font-family:'Liberation Sans',sans-serif;transform:scaleX(0.8771);">6</span>
<span class="t" id="t68" style="left:529.8px;top:498.0px;font-size:13.10px;color:#333;font-weight:400;font-family:'Liberation Sans',sans-serif;transform:scaleX(0.8771);">7</span>
<span class="t" id="t69" style="left:841.6px;top:96.0px;font-size:11.20px;color:#f2f2f2;font-weight:400;font-family:'Liberation Sans',sans-serif;transform:scaleX(0.8480);">ECO Organization</span>
</body></html>
